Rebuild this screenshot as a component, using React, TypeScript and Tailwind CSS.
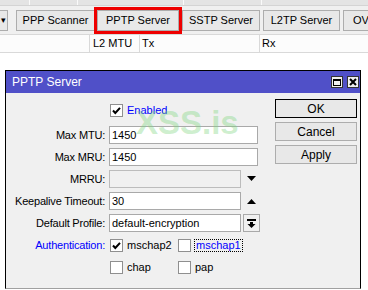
import React from "react";

const Check = ({ checked }: { checked?: boolean }) => (
  <div className="w-[13px] h-[13px] border border-[#8f8f8f] bg-white flex items-center justify-center shrink-0">
    {checked && (
      <svg width="9" height="9" viewBox="0 0 9 9">
        <path d="M1 4.5 L3.3 7 L8 1.8" stroke="#000" strokeWidth="2" fill="none" />
      </svg>
    )}
  </div>
);

const Row = ({ label, children, blue }: { label: string; children?: React.ReactNode; blue?: boolean }) => (
  <div className="flex items-center h-[18px]">
    <div
      className={`w-[103px] text-right pr-[4px] tracking-[-0.2px] whitespace-nowrap ${
        blue ? "text-[#0000ff]" : "text-black"
      }`}
    >
      {label}
    </div>
    {children}
  </div>
);

const Input = ({ value, w, disabled }: { value?: string; w: string; disabled?: boolean }) => (
  <div
    className={`${w} h-[18px] border flex items-center pl-[2px] shrink-0 ${
      disabled ? "border-[#bcbcbc] bg-[#f0f0f0]" : "border-[#a9a9a9] bg-white"
    }`}
  >
    {value}
  </div>
);

const Btn = ({ children, red, w, ml }: { children: React.ReactNode; red?: boolean; w: string; ml: string }) => (
  <div
    className={`${w} ${ml} shrink-0 whitespace-nowrap h-[21px] flex items-center justify-center bg-[#e8e8e8] border border-[#adadad] ${
      red ? "outline outline-[3px] outline-[#ee0000]" : ""
    }`}
  >
    {children}
  </div>
);

export default function App() {
  return (
    <div className="w-[368px] h-[290px] bg-white overflow-hidden relative font-['Liberation_Sans',Arial,sans-serif] text-[11px] text-black leading-none">
      {/* tab strip */}
      <div className="flex h-[6px] bg-[#e4e4e4] border-b border-[#d4d4d4]">
        <div className="w-[30px] border-r border-[#fafafa]" />
        <div className="w-[48px] border-r border-[#fafafa]" />
        <div className="w-[106px] border-r border-[#fafafa]" />
        <div className="w-[78px] border-r border-[#fafafa]" />
        <div className="flex-1" />
      </div>
      {/* toolbar */}
      <div className="h-[28px] bg-[#f0f0f0] flex items-center pt-[1px] overflow-hidden">
        <div className="w-[8px] shrink-0 h-[21px] bg-[#e8e8e8] border border-[#adadad] border-l-0 flex items-center justify-end pr-[1px] text-[9px]">
          ▾
        </div>
        <Btn w="w-[79px]" ml="ml-[8px]">PPP Scanner</Btn>
        <Btn w="w-[82px]" ml="ml-[2px]" red>PPTP Server</Btn>
        <Btn w="w-[78px]" ml="ml-[3px]">SSTP Server</Btn>
        <Btn w="w-[77px]" ml="ml-[3px]">L2TP Server</Btn>
        <div className="ml-[3px] shrink-0 whitespace-nowrap h-[21px] flex items-center pl-[9px] pr-[8px] bg-[#e8e8e8] border border-[#adadad]">
          OVPN Server
        </div>
      </div>
      {/* header */}
      <div className="h-[19px] flex border-t border-b border-[#d9d9d9] bg-[#fcfcfc] items-center">
        <div className="w-[90px] h-full border-r border-[#d9d9d9]" />
        <div className="w-[50px] h-full border-r border-[#d9d9d9] pl-[3px] flex items-center">L2 MTU</div>
        <div className="w-[120px] h-full border-r border-[#d9d9d9] pl-[2px] flex items-center">Tx</div>
        <div className="flex-1 h-full pl-[2px] flex items-center">Rx</div>
      </div>
      {/* dialog */}
      <div className="ml-[5px] mt-[17px] w-[356px] h-[219px] border border-black border-b-[#a0a0a0] bg-[#f0f0f0] flex flex-col relative">
        <div className="h-[22px] bg-[#5050c8] flex items-center justify-between pl-[6px] pr-[1px]">
          <span className="text-white text-[12px]">PPTP Server</span>
          <div className="flex gap-[4px]">
            <div className="w-[12px] h-[12px] bg-[#f0f0f0] border border-[#333] flex items-center justify-center">
              <div className="w-[8px] h-[7px] border border-black border-t-2" />
            </div>
            <div className="w-[12px] h-[12px] bg-[#f0f0f0] border border-[#333] flex items-center justify-center">
              <svg width="8" height="8" viewBox="0 0 8 8">
                <path d="M1 1 L7 7 M7 1 L1 7" stroke="#000" strokeWidth="2" />
              </svg>
            </div>
          </div>
        </div>
        <div className="flex flex-1">
          <div className="flex flex-col gap-[4px] pt-[11px]">
            <div className="flex items-center h-[18px] pl-[104px] gap-[4px] -mt-[3px] mb-[3px]">
              <Check checked />
              <span className="text-[#0000ff]">Enabled</span>
            </div>
            <Row label="Max MTU:">
              <Input value="1450" w="w-[149px]" />
            </Row>
            <Row label="Max MRU:">
              <Input value="1450" w="w-[149px]" />
            </Row>
            <Row label="MRRU:">
              <Input w="w-[132px]" disabled />
              <svg className="ml-[6px]" width="9" height="6" viewBox="0 0 9 6">
                <path d="M0 0 H9 L4.5 5 Z" fill="#000" />
              </svg>
            </Row>
            <Row label="Keepalive Timeout:">
              <Input value="30" w="w-[132px]" />
              <svg className="ml-[6px]" width="9" height="6" viewBox="0 0 9 6">
                <path d="M0 6 H9 L4.5 1 Z" fill="#000" />
              </svg>
            </Row>
            <Row label="Default Profile:">
              <Input value="default-encryption" w="w-[132px]" />
              <div className="ml-[2px] w-[17px] h-[18px] border border-[#a9a9a9] bg-[#f0f0f0] flex items-center justify-center">
                <svg width="9" height="9" viewBox="0 0 9 9">
                  <path d="M0 0.5 H9 M0 1.5 H9" stroke="#000" strokeWidth="1" />
                  <path d="M3 3 H6 V5 H8.5 L4.5 9 L0.5 5 H3 Z" fill="#000" />
                </svg>
              </div>
            </Row>
            <Row label="Authentication:" blue>
              <div className="flex items-center gap-[4px] w-[69px] pl-[1px]">
                <Check checked />
                <span>mschap2</span>
              </div>
              <div className="flex items-center gap-[3px]">
                <Check />
                <span className="text-[#0000ff] border border-dotted border-black px-[1px]">mschap1</span>
              </div>
            </Row>
            <Row label="">
              <div className="flex items-center gap-[4px] w-[69px] pl-[1px]">
                <Check />
                <span>chap</span>
              </div>
              <div className="flex items-center gap-[4px]">
                <Check />
                <span>pap</span>
              </div>
            </Row>
          </div>
          <div className="ml-auto mr-[3px] pt-[6px] flex flex-col gap-[4px]">
            <div className="w-[82px] h-[19px] border border-black bg-[#e8e8e8] flex items-center justify-center text-[12px]">OK</div>
            <div className="w-[82px] h-[19px] border border-[#adadad] bg-[#e8e8e8] flex items-center justify-center text-[12px]">Cancel</div>
            <div className="w-[82px] h-[19px] border border-[#adadad] bg-[#e8e8e8] flex items-center justify-center text-[12px]">Apply</div>
          </div>
        </div>
        <div className="absolute left-[130px] top-[35px] text-[33px] font-bold text-[#7fd67f]/40 leading-none pointer-events-none">
          XSS.is
        </div>
      </div>
    </div>
  );
}
